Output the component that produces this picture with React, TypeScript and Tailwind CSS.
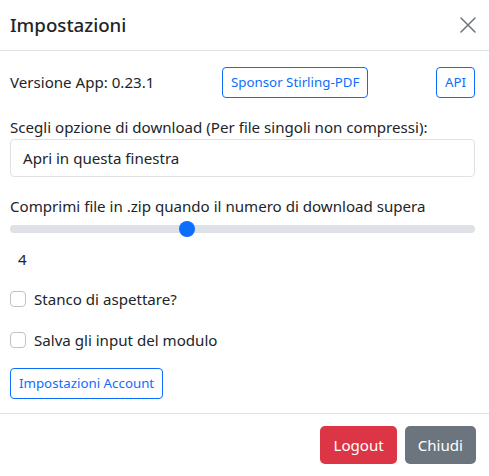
const font = { fontFamily: '"Noto Sans", "Open Sans", sans-serif' };

function CloseIcon() {
    return (
        <svg width="16" height="16" viewBox="0 0 16 16" fill="none">
            <path d="M1 1L15 15M15 1L1 15" stroke="#6c757d" strokeWidth="1.5" strokeLinecap="round" />
        </svg>
    );
}

function Check({ label }: { label: string }) {
    return (
        <label className="flex h-6 items-center gap-2 text-[15.1px] text-[#212529]">
            <span className="h-4 w-4 rounded-[4px] border border-[#bfc3c7] bg-white" />
            {label}
        </label>
    );
}

export default function App() {
    return (
        <div className="h-[476px] w-[489px] overflow-hidden bg-white" style={font}>
            <header className="flex h-[51px] items-center justify-between border-b border-[#dee2e6] pl-[10px] pr-[13px]">
                <h5 className="text-[18.7px] font-medium leading-6 text-[#212529]">Impostazioni</h5>
                <CloseIcon />
            </header>

            <div className="flex h-[363px] flex-col border-b border-[#dee2e6] pl-[10px] pr-[14px] pt-4 text-[15.1px] text-[#212529]">
                <div className="flex h-[31px] items-center">
                    <span className="w-[212px]">Versione App: 0.23.1</span>
                    <button className="h-[31px] rounded-[4px] border border-[#0d6efd] px-2 text-[13.3px] text-[#0d6efd]">
                        Sponsor Stirling-PDF
                    </button>
                    <button className="ml-auto h-[31px] rounded-[4px] border border-[#0d6efd] px-2 text-[13.3px] text-[#0d6efd]">
                        API
                    </button>
                </div>

                <p className="mt-[17px] leading-6">
                    Scegli opzione di download (Per file singoli non compressi):
                </p>
                <div className="flex h-[38px] items-center rounded-[4px] border border-[#dee2e6] px-3">
                    Apri in questa finestra
                </div>

                <p className="mt-[17px] leading-6">
                    Comprimi file in .zip quando il numero di download supera
                </p>
                <div className="relative mt-[3px] flex h-4 items-center">
                    <div className="h-2 w-full rounded-full bg-[#dee2e6]" />
                    <div className="absolute left-[169px] top-0 h-4 w-4 rounded-full bg-[#0d6efd]" />
                </div>
                <span className="ml-2 mt-[10px] leading-6">4</span>

                <div className="mt-4">
                    <Check label="Stanco di aspettare?" />
                </div>
                <div className="mt-[17px]">
                    <Check label="Salva gli input del modulo" />
                </div>

                <button className="mt-4 h-[31px] w-fit rounded-[4px] border border-[#0d6efd] px-2 text-[13.3px] text-[#0d6efd]">
                    Impostazioni Account
                </button>
            </div>

            <footer className="flex h-[62px] items-center justify-end gap-2 pr-[13px]">
                <button className="h-[38px] rounded-[5px] bg-[#dc3545] px-[13px] text-[15.1px] text-white">Logout</button>
                <button className="h-[38px] rounded-[5px] bg-[#6c757d] px-[13px] text-[15.1px] text-white">Chiudi</button>
            </footer>
        </div>
    );
}
